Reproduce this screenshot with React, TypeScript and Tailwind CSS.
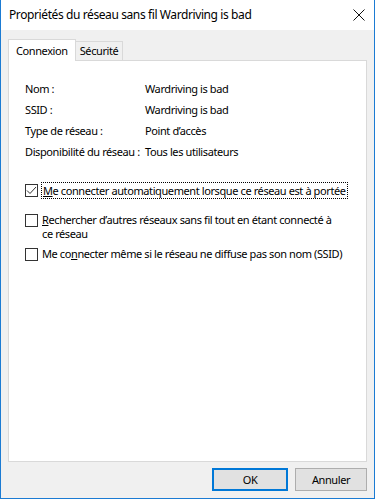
import React from 'react';

const rows: [string, string][] = [
  ['Nom :', 'Wardriving is bad'],
  ['SSID :', 'Wardriving is bad'],
  ['Type de réseau :', 'Point d’accès'],
  ['Disponibilité du réseau :', 'Tous les utilisateurs'],
];

const Box = ({ checked = false }: { checked?: boolean }) => (
  <div className="w-[13px] h-[13px] shrink-0 border border-[#333333] bg-white flex items-center justify-center">
    {checked ? (
      <svg width="11" height="11" viewBox="0 0 11 11">
        <path d="M1 5.5 L4 8.5 L10 2" fill="none" stroke="#333333" strokeWidth="1" />
      </svg>
    ) : null}
  </div>
);

export default function App() {
  return (
    <div className="w-[375px] h-[499px] flex flex-col bg-[#f0f0f0] border-x border-b border-[#1b7bd3] font-['Noto_Sans',sans-serif] text-[11px] leading-[14px] tracking-[-0.4px] text-black whitespace-nowrap">
      {/* title bar */}
      <div className="h-[30px] shrink-0 bg-white flex items-center justify-between pl-[8px] pr-[8px]">
        <span className="text-[12px]">Propriétés du réseau sans fil Wardriving is bad</span>
        <svg width="12" height="12" viewBox="0 0 12 12" className="mr-[1px]">
          <path d="M0.5 0.5 L11.5 11.5 M11.5 0.5 L0.5 11.5" stroke="#111" strokeWidth="1" />
        </svg>
      </div>

      <div className="flex-1 flex flex-col px-[7px] pt-[9px]">
        {/* tabs */}
        <div className="flex items-end h-[21px] shrink-0">
          <div className="relative z-10 h-[22px] -mb-px px-[7px] bg-white border-x border-t border-[#d9d9d9] flex items-center">
            Connexion
          </div>
          <div className="h-[19px] px-[4px] bg-[#f0f0f0] border-t border-r border-[#d9d9d9] flex items-center">
            Sécurité
          </div>
        </div>

        {/* panel */}
        <div className="flex-1 bg-white border border-[#d9d9d9] px-[16px] pt-[17px]">
          {rows.map(([label, value]) => (
            <div key={label} className="h-[21px] flex items-center">
              <span className="w-[120px] shrink-0">{label}</span>
              <span>{value}</span>
            </div>
          ))}

          <div className="mt-[20px] flex items-center gap-[3px]">
            <Box checked />
            <span className="h-[17px] px-px flex items-center border border-dotted border-black">
              <span><u>M</u>e connecter automatiquement lorsque ce réseau est à portée</span>
            </span>
          </div>

          <div className="mt-[14px] flex items-start gap-[4px]">
            <div className="mt-[1px]">
              <Box />
            </div>
            <span>
              <u>R</u>echercher d’autres réseaux sans fil tout en étant connecté à
              <br />
              ce réseau
            </span>
          </div>

          <div className="mt-[6px] flex items-center gap-[4px]">
            <Box />
            <span>
              Me co<u>n</u>necter même si le réseau ne diffuse pas son nom (SSID)
            </span>
          </div>
        </div>

        {/* buttons */}
        <div className="shrink-0 flex justify-end gap-[7px] pt-[6px] pb-[7px]">
          <button className="w-[76px] h-[23px] bg-[#e1e1e1] border-2 border-[#0078d7] flex items-center justify-center">
            OK
          </button>
          <button className="w-[72px] h-[23px] bg-[#e1e1e1] border border-[#adadad] flex items-center justify-center">
            Annuler
          </button>
        </div>
      </div>
    </div>
  );
}
